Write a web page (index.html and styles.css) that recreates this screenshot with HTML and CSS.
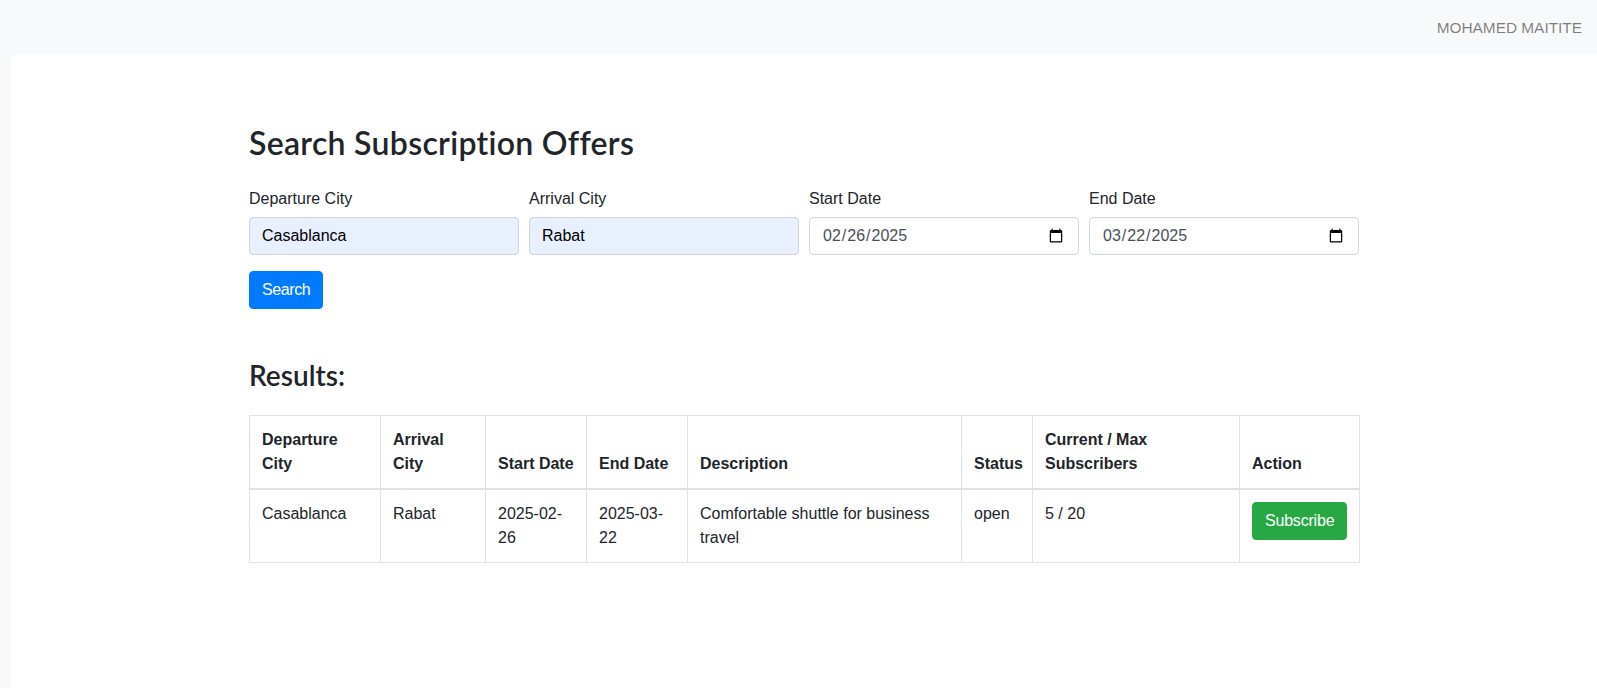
FILE: index.html
```html
<!DOCTYPE html>
<html lang="en">
<head>
<meta charset="utf-8">
<title>Search Subscription Offers</title>
<link rel="stylesheet" href="styles.css">
</head>
<body>
<nav class="navbar">
  <span class="nav-user">MOHAMED MAITITE</span>
</nav>
<main class="main">
  <div class="container">
    <h2 class="page-title">Search Subscription Offers</h2>
    <form class="search-form">
      <div class="form-row">
        <div class="form-col">
          <label class="form-label" for="dep">Departure City</label>
          <input class="form-control autofilled" id="dep" type="text" value="Casablanca">
        </div>
        <div class="form-col">
          <label class="form-label" for="arr">Arrival City</label>
          <input class="form-control autofilled" id="arr" type="text" value="Rabat">
        </div>
        <div class="form-col">
          <label class="form-label" for="sd">Start Date</label>
          <input class="form-control" id="sd" type="date" value="2025-02-26">
        </div>
        <div class="form-col">
          <label class="form-label" for="ed">End Date</label>
          <input class="form-control" id="ed" type="date" value="2025-03-22">
        </div>
      </div>
      <button class="btn btn-primary" type="button">Search</button>
    </form>

    <h3 class="results-title">Results:</h3>
    <table class="table">
      <colgroup>
        <col class="c-dep"><col class="c-arr"><col class="c-sd"><col class="c-ed">
        <col class="c-desc"><col class="c-status"><col class="c-subs"><col class="c-act">
      </colgroup>
      <thead>
        <tr>
          <th>Departure City</th>
          <th>Arrival City</th>
          <th>Start Date</th>
          <th>End Date</th>
          <th>Description</th>
          <th>Status</th>
          <th>Current / Max Subscribers</th>
          <th>Action</th>
        </tr>
      </thead>
      <tbody>
        <tr>
          <td>Casablanca</td>
          <td>Rabat</td>
          <td>2025-02-26</td>
          <td>2025-03-22</td>
          <td>Comfortable shuttle for business travel</td>
          <td>open</td>
          <td>5 / 20</td>
          <td><button class="btn btn-success" type="button">Subscribe</button></td>
        </tr>
      </tbody>
    </table>
  </div>
</main>
</body>
</html>
```

FILE: styles.css
```css
* { box-sizing: border-box; }

html, body {
  margin: 0;
  padding: 0;
  height: 100%;
}

body {
  font-family: "Liberation Sans", Arial, sans-serif;
  font-size: 16px;
  line-height: 1.5;
  color: #212529;
  background: #f8f9fa;
  display: flex;
  flex-direction: column;
}

.navbar {
  height: 55px;
  flex: 0 0 55px;
  display: flex;
  align-items: center;
  justify-content: flex-end;
  padding: 0 15px 0 16px;
}

.nav-user {
  color: rgba(0, 0, 0, 0.5);
  font-size: 15.4px;
}

.main {
  flex: 1 1 auto;
  margin-left: 11px;
  background: #fff;
}

.container {
  max-width: 1140px;
  margin: 0 auto;
  padding: 69px 15px 0;
}

.page-title {
  font-family: Lato, "Liberation Sans", sans-serif;
  font-weight: 600;
  font-size: 32px;
  line-height: 38.4px;
  letter-spacing: 0.3px;
  margin: 0 0 25px;
}

.form-row {
  display: flex;
  margin: 0 -5px;
}

.form-col {
  flex: 0 0 25%;
  padding: 0 5px;
  margin-bottom: 16px;
}

.form-label {
  display: block;
  margin-bottom: 6px;
}

.form-control {
  display: block;
  width: 100%;
  height: 38px;
  padding: 6px 12px;
  font-family: "Liberation Sans", Arial, sans-serif;
  font-size: 16px;
  line-height: 1.5;
  color: #495057;
  background: #fff;
  border: 1px solid #ced4da;
  border-radius: 4px;
}

.form-control.autofilled {
  background: #e8f0fe;
  color: #000;
}

.btn {
  display: inline-block;
  font-family: "Liberation Sans", Arial, sans-serif;
  font-size: 16px;
  line-height: 1.5;
  padding: 6px 12px;
  border: 1px solid transparent;
  border-radius: 4px;
  color: #fff;
  cursor: pointer;
}

.btn-primary {
  background: #007bff;
  border-color: #007bff;
  letter-spacing: -0.4px;
}

.btn-success {
  background: #28a745;
  border-color: #28a745;
  letter-spacing: -0.2px;
}

.results-title {
  font-family: Lato, "Liberation Sans", sans-serif;
  font-weight: 600;
  font-size: 28px;
  line-height: 33.6px;
  margin: 50px 0 22px;
}

.table {
  width: 100%;
  table-layout: fixed;
  border-collapse: collapse;
  border: 1px solid #dee2e6;
}

.c-dep { width: 131px; }
.c-arr { width: 105px; }
.c-sd { width: 101px; }
.c-ed { width: 101px; }
.c-desc { width: 274px; }
.c-status { width: 71px; }
.c-subs { width: 207px; }
.c-act { width: 120px; }

.table th,
.table td {
  padding: 12px;
  border: 1px solid #dee2e6;
  text-align: left;
}

.table th {
  vertical-align: bottom;
  font-weight: 700;
  border-bottom-width: 2px;
}

.table td {
  vertical-align: top;
}
```
